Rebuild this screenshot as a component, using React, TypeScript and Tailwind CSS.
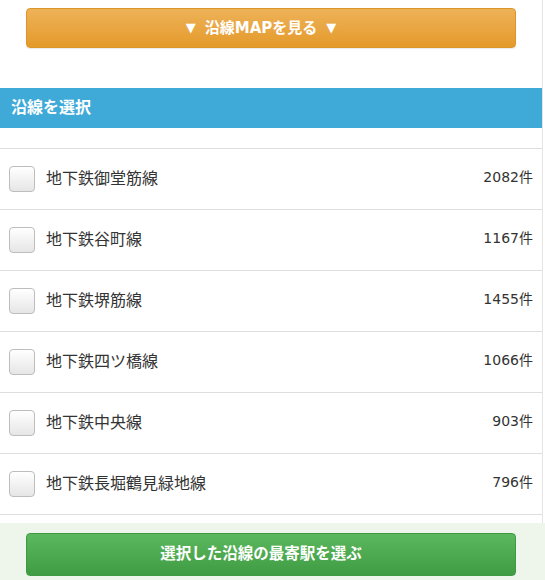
import React from 'react';

const lines = [
  { name: '地下鉄御堂筋線', count: 2082 },
  { name: '地下鉄谷町線', count: 1167 },
  { name: '地下鉄堺筋線', count: 1455 },
  { name: '地下鉄四ツ橋線', count: 1066 },
  { name: '地下鉄中央線', count: 903 },
  { name: '地下鉄長堀鶴見緑地線', count: 796 },
];

const App: React.FC = () => {
  return (
    <div className="w-[545px] min-h-[580px] bg-white flex flex-col font-['DejaVu_Sans','Noto_Sans_CJK_JP',sans-serif] text-[#333]">
      <div className="w-[543px] border-r border-[#e4e4e4]">
        {/* Map button */}
        <div className="pt-2 pl-[26px]">
          <button className="w-[490px] h-10 pr-5 rounded-[4px] border border-[#dc9528] bg-gradient-to-b from-[#eeb257] to-[#e49a27] text-white font-bold text-[15px] flex items-center justify-center gap-[9px] shadow-[0_1px_1px_rgba(0,0,0,0.08)]">
            <span className="text-[13px]">▼</span>
            <span>沿線MAPを見る</span>
            <span className="text-[13px]">▼</span>
          </button>
        </div>

        {/* Section header */}
        <div className="mt-10 h-10 bg-[#3faad8] flex items-center pl-[11px]">
          <span className="text-white font-bold text-[16px]">沿線を選択</span>
        </div>

        {/* Line list */}
        <ul className="mt-5 border-t border-[#dedede]">
          {lines.map((line) => (
            <li
              key={line.name}
              className="h-[61px] border-b border-[#dedede] flex items-center pl-[9px] pr-[9px]"
            >
              <span className="w-[26px] h-[26px] rounded-[4px] border border-[#bdbdbd] bg-gradient-to-b from-white to-[#e6e6e6] shrink-0" />
              <span className="ml-[11px] text-[16px] flex-1">{line.name}</span>
              <span className="text-[14px] -mt-[3px]">{line.count}件</span>
            </li>
          ))}
        </ul>
        <div className="h-2" />
      </div>

      {/* Footer */}
      <div className="flex-1 bg-[#eef6ec] pt-[10px] pb-1 pl-[26px]">
        <button className="w-[490px] h-[43px] pr-5 rounded-[4px] border border-[#3e9a40] bg-gradient-to-b from-[#5cb85e] to-[#3f9c42] text-white font-bold text-[15.5px] flex items-center justify-center">
          選択した沿線の最寄駅を選ぶ
        </button>
      </div>
    </div>
  );
};

export default App;
